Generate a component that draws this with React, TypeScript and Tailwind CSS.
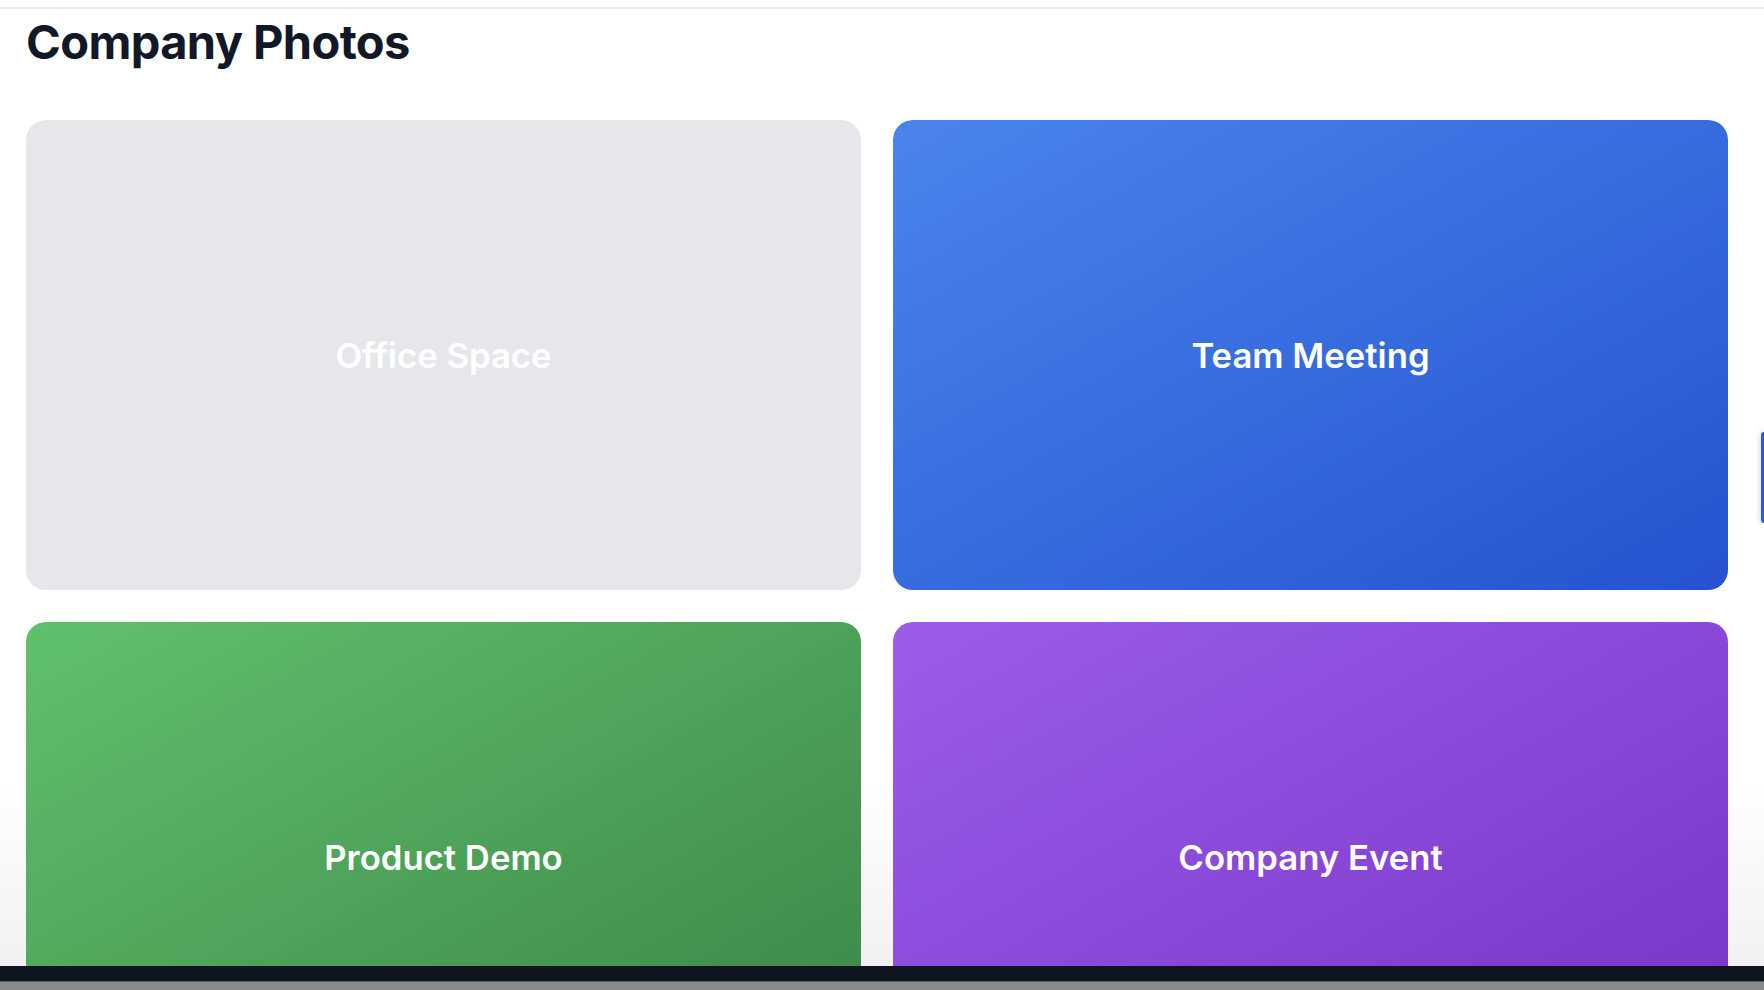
import type { FC } from "react";

const photos = [
  { id: 1, title: "Office Space", bg: "bg-[#e5e7eb]" },
  { id: 2, title: "Team Meeting", bg: "bg-gradient-to-br from-[#4a85ec] to-[#2652d0]" },
  { id: 3, title: "Product Demo", bg: "bg-gradient-to-br from-[#5fc16b] to-[#3c8447]" },
  { id: 4, title: "Company Event", bg: "bg-gradient-to-br from-[#9d5dea] to-[#7632c6]" },
];

const App: FC = () => {
  return (
    <div className="relative h-[990px] flex flex-col overflow-hidden bg-white font-['Inter',sans-serif]">
      {/* top strip */}
      <div className="h-[9px] shrink-0 bg-white border-b-2 border-[#e9e9ea]"></div>

      {/* content */}
      <div className="flex-1 overflow-hidden pl-[26px] bg-gradient-to-b from-white from-80% to-[#f1f1f1]">
        <h2 className="mt-[9px] text-[47px] leading-none font-bold text-[#111827] tracking-[-0.6px]">
          Company Photos
        </h2>
        <div className="mt-[55px] grid grid-cols-2 gap-x-[32px] gap-y-[32px] w-[1702px]">
          {photos.map((photo) => (
            <div
              key={photo.id}
              className={`h-[470px] rounded-[20px] flex items-center justify-center ${photo.bg}`}
            >
              <span className="text-[34.7px] font-semibold text-white">
                {photo.title}
              </span>
            </div>
          ))}
        </div>
      </div>

      {/* bottom bars */}
      <div className="h-[15px] shrink-0 bg-[#0f1421]"></div>
      <div className="h-[9px] shrink-0 bg-[#8a8a8a] border-t border-[#5a5d66]"></div>

      {/* side tab peeking in */}
      <div className="absolute right-0 top-[432px] w-[3px] h-[91px] rounded-l-[3px] bg-[#2a5be8] shadow-[0_0_6px_rgba(0,0,0,0.25)]"></div>
    </div>
  );
};

export default App;
